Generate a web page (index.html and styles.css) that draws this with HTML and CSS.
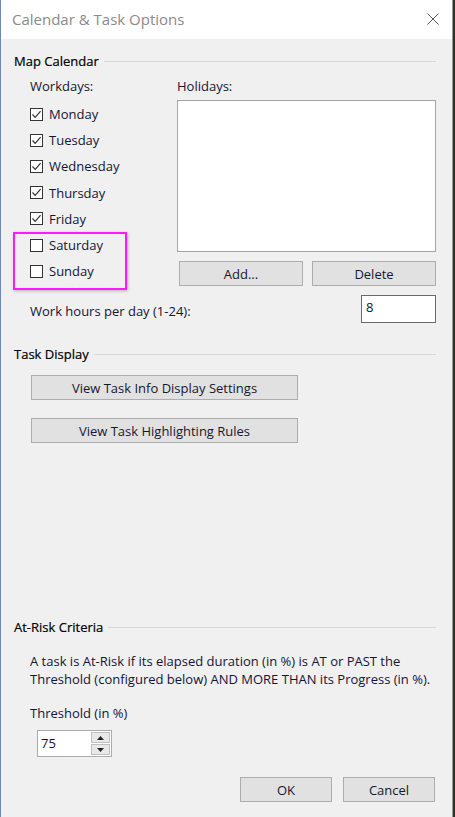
FILE: index.html
```html
<!DOCTYPE html>
<html>
<head>
<meta charset="utf-8">
<link rel="stylesheet" href="styles.css">
</head>
<body>
<div class="window">
  <div class="titlebar">
    <span class="title">Calendar &amp; Task Options</span>
    <svg class="close" width="12" height="12" viewBox="0 0 12 12"><path d="M0.5 0.5 L11.5 11.5 M11.5 0.5 L0.5 11.5" stroke="#555" stroke-width="1" fill="none"/></svg>
  </div>
  <div class="content">
    <div class="group-head"><span>Map Calendar</span><i class="rule"></i></div>
    <div class="map">
      <div class="workdays">
        <div class="label">Workdays:</div>
        <div class="days">
          <div class="day"><span class="box"><svg viewBox="0 0 13 13"><path d="M2.5 6.5 L5.2 9.3 L10.6 3.2" stroke="#333" stroke-width="1.2" fill="none"/></svg></span>Monday</div>
          <div class="day"><span class="box"><svg viewBox="0 0 13 13"><path d="M2.5 6.5 L5.2 9.3 L10.6 3.2" stroke="#333" stroke-width="1.2" fill="none"/></svg></span>Tuesday</div>
          <div class="day"><span class="box"><svg viewBox="0 0 13 13"><path d="M2.5 6.5 L5.2 9.3 L10.6 3.2" stroke="#333" stroke-width="1.2" fill="none"/></svg></span>Wednesday</div>
          <div class="day"><span class="box"><svg viewBox="0 0 13 13"><path d="M2.5 6.5 L5.2 9.3 L10.6 3.2" stroke="#333" stroke-width="1.2" fill="none"/></svg></span>Thursday</div>
          <div class="day"><span class="box"><svg viewBox="0 0 13 13"><path d="M2.5 6.5 L5.2 9.3 L10.6 3.2" stroke="#333" stroke-width="1.2" fill="none"/></svg></span>Friday</div>
          <div class="day"><span class="box"></span>Saturday</div>
          <div class="day"><span class="box"></span>Sunday</div>
        </div>
        <div class="highlight"></div>
      </div>
      <div class="holidays">
        <div class="label">Holidays:</div>
        <div class="listbox"></div>
        <div class="hbtns"><div class="btn">Add...</div><div class="btn">Delete</div></div>
      </div>
    </div>
    <div class="hours"><span>Work hours per day (1-24):</span><div class="field">8</div></div>

    <div class="group-head task-head"><span>Task Display</span><i class="rule"></i></div>
    <div class="task-btns">
      <div class="btn wide">View Task Info Display Settings</div>
      <div class="btn wide">View Task Highlighting Rules</div>
    </div>

    <div class="group-head risk-head"><span>At-Risk Criteria</span><i class="rule"></i></div>
    <div class="risk">
      <p class="desc">A task is At-Risk if its elapsed duration (in %) is AT or PAST the<br>Threshold (configured below) AND MORE THAN its Progress (in %).</p>
      <div class="label">Threshold (in %)</div>
      <div class="spinner">
        <div class="spin-text">75</div>
        <div class="spin-btns">
          <div class="spin-btn"><svg width="7" height="4" viewBox="0 0 7 4"><path d="M0 4 L3.5 0 L7 4 Z" fill="#222"/></svg></div>
          <div class="spin-btn"><svg width="7" height="4" viewBox="0 0 7 4"><path d="M0 0 L3.5 4 L7 0 Z" fill="#222"/></svg></div>
        </div>
      </div>
    </div>
    <div class="footer"><div class="btn dlg">OK</div><div class="btn dlg">Cancel</div></div>
  </div>
</div>
</body>
</html>
```
FILE: styles.css
```css
html, body {
  margin: 0;
  padding: 0;
}
body {
  background: #2e3322;
  width: 455px;
  height: 817px;
  overflow: hidden;
  font-family: "Open Sans", "Noto Sans", sans-serif;
  font-size: 13px;
  line-height: 16px;
  color: #141436;
}
.window {
  width: 451px;
  height: 817px;
  border-left: 1px solid #6d8bb0;
  border-right: 1px solid #9a9a9a;
  background: #f0f0f0;
  display: flex;
  flex-direction: column;
}
.titlebar {
  height: 39px;
  background: #fff;
  display: flex;
  align-items: center;
  justify-content: space-between;
  padding: 0 13px 0 11px;
  flex-shrink: 0;
}
.title {
  font-size: 15px;
  color: #8a8a8a;
  margin-top: -2px;
}
.close {
  display: block;
  margin-top: -1px;
}
.content {
  padding: 14px 16px 0 13px;
  display: flex;
  flex-direction: column;
}
.group-head {
  display: flex;
  align-items: center;
  gap: 5px;
  height: 16px;
  color: #000;
}
.group-head span {
  -webkit-text-stroke: 0.2px #000;
}
.rule {
  flex: 1;
  height: 1px;
  background: #d8d8d8;
  margin-top: 1px;
}
.map {
  display: flex;
  padding-left: 16px;
  margin-top: 9px;
}
.workdays {
  width: 147px;
  position: relative;
}
.days {
  margin-top: 7px;
}
.day {
  height: 26.2px;
  display: flex;
  align-items: center;
  gap: 6px;
}
.box {
  width: 13px;
  height: 13px;
  box-sizing: border-box;
  border: 1px solid #333;
  background: #fff;
  display: block;
  flex-shrink: 0;
}
.box svg {
  display: block;
  width: 13px;
  height: 13px;
  margin: -1px;
}
.highlight {
  position: absolute;
  left: -17px;
  top: 154px;
  width: 114px;
  height: 58px;
  box-sizing: border-box;
  border: 2px solid #ff19ff;
  box-shadow: 1px 1px 3px rgba(0, 0, 0, 0.25);
}
.holidays {
  width: 259px;
}
.listbox {
  margin-top: 6px;
  height: 152px;
  box-sizing: border-box;
  border: 1px solid #a5a5a5;
  background: #fff;
}
.hbtns {
  display: flex;
  justify-content: space-between;
  margin-top: 9px;
  padding-left: 2px;
}
.btn {
  height: 25px;
  box-sizing: border-box;
  border: 1px solid #adadad;
  background: #e1e1e1;
  display: flex;
  align-items: center;
  justify-content: center;
  color: #16162e;
}
.hbtns .btn {
  width: 124px;
}
.hours {
  display: flex;
  align-items: center;
  justify-content: space-between;
  padding-left: 16px;
  margin-top: 9px;
}
.hours span {
  margin-top: 3px;
}
.field {
  width: 75px;
  height: 28px;
  box-sizing: border-box;
  border: 1px solid #6a6a6a;
  background: #fff;
  padding: 3px 0 0 4px;
}
.task-head {
  margin-top: 23px;
}
.task-btns {
  display: flex;
  flex-direction: column;
  gap: 18px;
  padding-left: 17px;
  margin-top: 13px;
}
.btn.wide {
  width: 267px;
}
.risk-head {
  margin-top: 176px;
}
.risk {
  padding-left: 16px;
}
.desc {
  margin: 17px 0 0;
  line-height: 18px;
  white-space: nowrap;
}
.risk .label {
  margin-top: 17px;
}
.spinner {
  margin: 9px 0 0 7px;
  width: 75px;
  height: 27px;
  box-sizing: border-box;
  border: 1px solid #ababab;
  background: #fff;
  display: flex;
}
.spin-text {
  flex: 1;
  padding: 4px 0 0 3px;
}
.spin-btns {
  width: 19px;
  display: flex;
  flex-direction: column;
  gap: 1px;
  padding: 1px 1px 1px 0;
}
.spin-btn {
  flex: 1;
  background: #e8e8e8;
  border: 1px solid #c0c0c0;
  display: flex;
  align-items: center;
  justify-content: center;
}
.spin-btn svg {
  display: block;
}
.footer {
  display: flex;
  justify-content: flex-end;
  gap: 11px;
  margin-top: 20px;
  padding-right: 1px;
}
.btn.dlg {
  width: 92px;
}
```
